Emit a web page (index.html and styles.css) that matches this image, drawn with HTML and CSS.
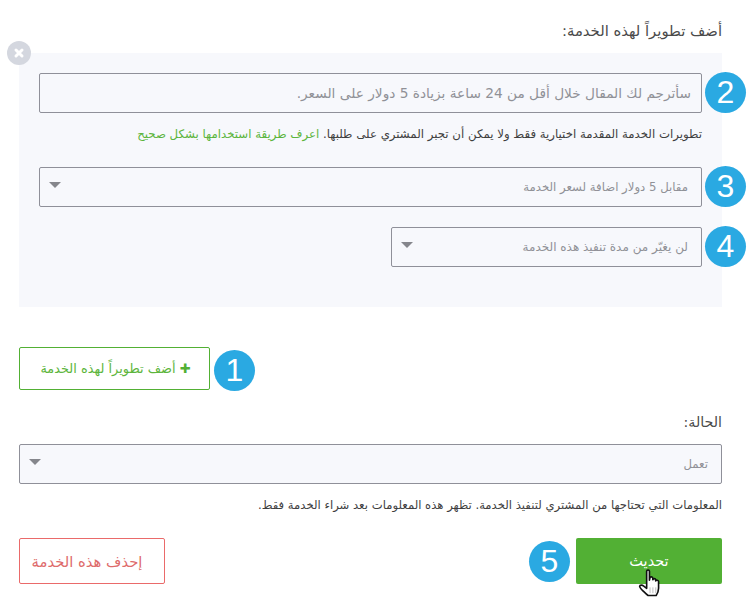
FILE: index.html
```html
<!DOCTYPE html>
<html lang="ar" dir="rtl">
<head>
<meta charset="utf-8">
<title>تحديث الخدمة</title>
<link rel="stylesheet" href="styles.css">
</head>
<body>
<main class="page">
  <h2 class="label label-top">أضف تطويراً لهذه الخدمة:</h2>
  <section class="panel">
    <span class="close"><svg viewBox="0 0 12 12" width="12" height="12"><path d="M3 3l6 6M9 3l-6 6" stroke="#fff" stroke-width="3" stroke-linecap="round"/></svg></span>
    <div class="field">
      <div class="control control-text">سأترجم لك المقال خلال أقل من 24 ساعة بزيادة 5 دولار على السعر.</div>
      <span class="badge">2</span>
    </div>
    <p class="hint hint-panel">تطويرات الخدمة المقدمة اختيارية فقط ولا يمكن أن تجبر المشتري على طلبها. <a href="#">اعرف طريقة استخدامها بشكل صحيح</a></p>
    <div class="field field-select">
      <div class="control control-select"><span>مقابل 5 دولار اضافة لسعر الخدمة</span><i class="caret"></i></div>
      <span class="badge">3</span>
    </div>
    <div class="field field-select field-short">
      <div class="control control-select"><span>لن يغيّر من مدة تنفيذ هذه الخدمة</span><i class="caret"></i></div>
      <span class="badge">4</span>
    </div>
  </section>

  <div class="add-row">
    <button class="btn btn-add" type="button"><b class="plus">✚</b> أضف تطويراً لهذه الخدمة</button>
    <span class="badge badge-inline">1</span>
  </div>

  <h2 class="label label-status">الحالة:</h2>
  <div class="control control-select control-full"><span>تعمل</span><i class="caret"></i></div>
  <p class="hint hint-status">المعلومات التي تحتاجها من المشتري لتنفيذ الخدمة. تظهر هذه المعلومات بعد شراء الخدمة فقط.</p>

  <div class="actions">
    <div class="submit-wrap">
      <button class="btn btn-submit" type="button">تحديث</button>
      <span class="badge badge-inline">5</span>
      <svg class="hand" viewBox="0 0 26 32" width="25" height="31"><path d="M9 3.2c0-1.700 2.900-1.700 2.900 0v9.300l.6-3c1.500-.9 2.800-.3 2.900 1v1.600c.5-1.600 2.800-1.500 3 .1v1.200c.6-1.300 2.900-1.100 3 .6v7c0 3.400-1.500 6-2.500 7.500H10.500C9 27.500 7.500 26 5.500 24 3.800 22.300 1.600 20.200 1.700 19c.3-2 3-1.300 4.300-.3L9 21z" fill="#fff" stroke="#111" stroke-width="1.700" stroke-linejoin="round"/><path d="M12.500 20v6M15.500 20v6M18.500 20v6" stroke="#bbb" stroke-width="1"/></svg>
    </div>
    <button class="btn btn-delete" type="button">إحذف هذه الخدمة</button>
  </div>
</main>
</body>
</html>
```
FILE: styles.css
```css
* { box-sizing: border-box; }
html, body { margin: 0; background: #fff; }
body {
  font-family: "DejaVu Sans", "Liberation Sans", sans-serif;
  color: #3c3f45;
  overflow: hidden;
}
.page {
  width: 747px;
  height: 603px;
  padding: 0 25px 0 19px;
}
.label {
  margin: 0;
  font-size: 14.8px;
  font-weight: 400;
  line-height: 20px;
  color: #4a4a4a;
}
.label-top { padding-top: 21px; height: 53px; }
.panel {
  position: relative;
  height: 254px;
  padding: 20px 20px 0;
  background: #f7f8fc;
}
.close {
  position: absolute;
  top: -12px;
  left: -12px;
  width: 24px;
  height: 24px;
  border-radius: 50%;
  background: #d4d7df;
  display: flex;
  align-items: center;
  justify-content: center;
}
.field { position: relative; }
.field-select { margin-bottom: 20px; }
.field-short { width: 311px; }
.field-short .control { font-size: 12px; }
.control {
  height: 40px;
  border: 1px solid #8f9099;
  border-radius: 2px;
  background: #f7f8fc;
  color: #909197;
  display: flex;
  align-items: center;
  justify-content: space-between;
}
.control-text { padding: 0 10px; font-size: 13.7px; }
.control-select { padding: 0 13px 0 9px; font-size: 11.7px; }
.control-full { width: 100%; }
.caret {
  width: 0;
  height: 0;
  border-left: 6px solid transparent;
  border-right: 6px solid transparent;
  border-top: 6px solid #85868c;
  margin-top: -4px;
}
.badge {
  position: absolute;
  top: -1px;
  right: -44px;
  width: 41px;
  height: 41px;
  border-radius: 50%;
  background: #2aa9e2;
  color: #fff;
  font: 400 32px/41px "Liberation Sans", sans-serif;
  text-align: center;
}
.badge-inline { position: static; flex: none; }
.hint {
  margin: 0;
  font-size: 11.76px;
  line-height: 18px;
  color: #3f3f3f;
}
.hint-panel { padding-top: 12px; height: 54px; }
.hint a { color: #5cb53c; text-decoration: none; }
.add-row {
  display: flex;
  direction: ltr;
  align-items: flex-end;
  gap: 4px;
  margin-top: 40px;
  height: 44px;
}
.btn {
  font-family: inherit;
  border-radius: 2px;
  background: #fff;
  cursor: pointer;
  padding: 0;
}
.btn-add {
  direction: rtl;
  width: 191px;
  height: 43px;
  align-self: flex-start;
  border: 1px solid #52b034;
  color: #5cb53c;
  font-size: 12.9px;
  padding-left: 2px;
}
.plus { font-size: 13px; line-height: 1; color: #52b034; }
.label-status { margin-top: 21px; height: 32px; padding-top: 0; font-size: 14.2px; }
.hint-status { padding-top: 12px; height: 54px; font-size: 11.65px; }
.actions {
  display: flex;
  justify-content: space-between;
}
.submit-wrap {
  position: relative;
  display: flex;
  align-items: center;
  gap: 6px;
}
.btn-submit {
  width: 146px;
  height: 46px;
  border: 0;
  background: #52b034;
  color: #fff;
  font-size: 14.5px;
}
.hand {
  position: absolute;
  top: 30px;
  right: 59px;
}
.btn-delete {
  width: 146px;
  height: 46px;
  border: 1px solid #ea6a6a;
  color: #de6b6b;
  font-size: 14.8px;
  padding-right: 10px;
}
```
